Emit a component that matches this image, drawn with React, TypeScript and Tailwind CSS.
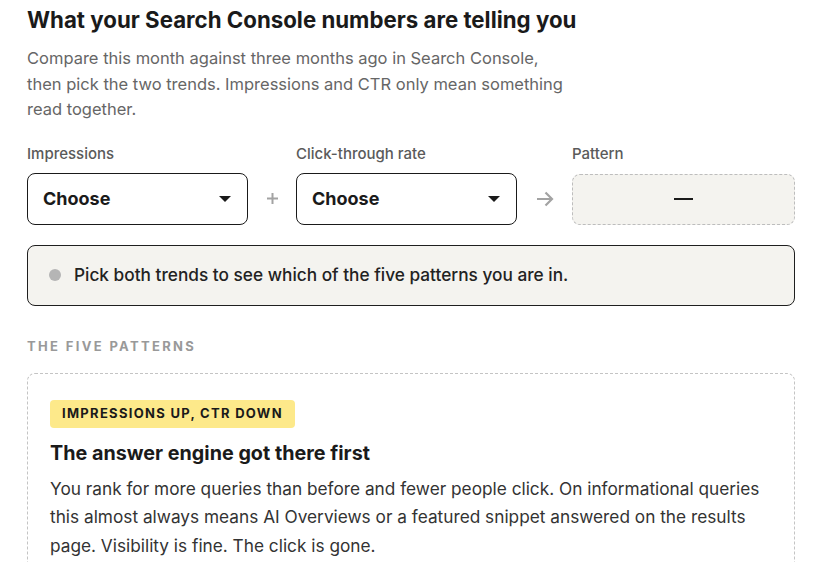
import React from 'react';

const Caret: React.FC = () => (
  <svg width="12" height="6" viewBox="0 0 12 6" className="shrink-0">
    <path d="M0 0h12L6 6z" fill="#1a1a1a" />
  </svg>
);

const SelectBox: React.FC<{ label: string }> = ({ label }) => (
  <div className="flex flex-col w-[221px]">
    <span className="text-[15px] leading-5 font-medium text-[#5a5a5a] mb-[9px]">{label}</span>
    <div className="h-[52px] border border-[#1a1a1a] rounded-lg flex items-center justify-between pl-[15px] pr-[16px] bg-white">
      <span className="text-[18px] font-bold text-[#1a1a1a]">Choose</span>
      <Caret />
    </div>
  </div>
);

export default function App() {
  return (
    <div className="min-h-screen bg-white pl-[27px] pr-[25px] pt-[6px] font-['Inter',sans-serif] text-[#1a1a1a]">
      {/* Intro */}
      <h1 className="text-[22.25px] leading-7 font-bold">
        What your Search Console numbers are telling you
      </h1>
      <p className="mt-3 max-w-[545px] text-[16.5px] leading-[25.5px] text-[#666]">
        Compare this month against three months ago in Search Console, then pick the two trends. Impressions and CTR only mean something read together.
      </p>

      {/* Picker row */}
      <div className="mt-[21px] flex items-end">
        <SelectBox label="Impressions" />
        <div className="w-[48px] h-[52px] flex items-center justify-center text-[#a3a3a3]">
          <svg width="13" height="13" viewBox="0 0 13 13">
            <path d="M6.5 1v11M1 6.5h11" stroke="currentColor" strokeWidth="2" />
          </svg>
        </div>
        <SelectBox label="Click-through rate" />
        <div className="w-[55px] h-[52px] flex items-center justify-center text-[#a3a3a3]">
          <svg width="18" height="16" viewBox="0 0 18 16">
            <path d="M1 8h15M9.5 1.5L16 8l-6.5 6.5" stroke="currentColor" strokeWidth="2.2" fill="none" />
          </svg>
        </div>
        <div className="flex flex-col flex-1">
          <span className="text-[15px] leading-5 font-medium text-[#5a5a5a] mb-[10px]">Pattern</span>
          <div className="h-[51px] border border-dashed border-[#bdbdbd] rounded-lg bg-[#f4f3ef] flex items-center justify-center">
            <span className="block w-[19px] h-[2.5px] bg-[#1a1a1a]" />
          </div>
        </div>
      </div>

      {/* Status */}
      <div className="mt-[20px] h-[61px] border border-[#1f1f1f] rounded-lg bg-[#f4f3ef] flex items-center pl-[21px]">
        <span className="w-[12px] h-[12px] rounded-full bg-[#b5b5b5] mr-[13px]" />
        <span className="text-[17.25px] font-medium text-[#222]">
          Pick both trends to see which of the five patterns you are in.
        </span>
      </div>

      {/* Patterns */}
      <div className="mt-8 text-[13px] leading-4 font-bold tracking-[0.18em] text-[#999]">THE FIVE PATTERNS</div>

      <div className="mt-[19px] border border-dashed border-[#c4c4c4] rounded-lg px-[22px] pt-[26px] pb-6">
        <span className="inline-flex items-center h-[28px] px-3 rounded bg-[#fde98a] text-[13px] font-bold tracking-[0.1em] text-[#1a1a1a]">
          IMPRESSIONS UP, CTR DOWN
        </span>
        <h2 className="mt-3 text-[19.75px] leading-[26px] font-bold">
          The answer engine got there first
        </h2>
        <p className="mt-[9px] text-[17.25px] leading-[28.5px] text-[#333]">
          You rank for more queries than before and fewer people click. On informational queries this almost always means AI Overviews or a featured snippet answered on the results page. Visibility is fine. The click is gone.
        </p>
      </div>
    </div>
  );
}
